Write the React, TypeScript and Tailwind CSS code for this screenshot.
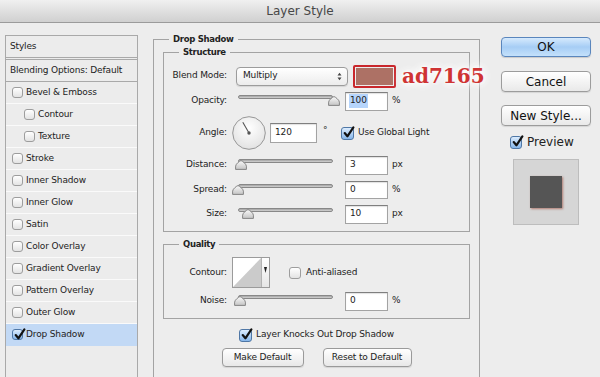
import React from "react";

function Box({ checked, cls }: { checked?: boolean; cls: string }) {
  return (
    <span
      className={`relative inline-block shrink-0 rounded-[3px] border ${
        checked
          ? "border-[#4f77a6] bg-linear-to-b from-[#dcecfd] to-[#86b6ea]"
          : "border-[#9d9d9d] bg-linear-to-b from-white to-[#e3e3e3]"
      } ${cls}`}
    >
      {checked && (
        <svg viewBox="0 0 12 12" className="absolute -top-[2px] left-[0px] h-[13px] w-[13px]">
          <path
            d="M2.5 6.5 L5 9.5 L10.5 1.2"
            fill="none"
            stroke="#111"
            strokeWidth="2"
            strokeLinecap="round"
            strokeLinejoin="round"
          />
        </svg>
      )}
    </span>
  );
}

function Slider({ pos }: { pos: number }) {
  return (
    <div className="relative ml-[11px] h-[12px] w-[95px] shrink-0">
      <div className="h-[4px] w-full rounded-full border border-[#888] bg-linear-to-b from-[#a3a3a3] to-[#d4d4d4]" />
      <svg
        viewBox="0 0 12 10"
        className="absolute top-[1px] h-[10px] w-[12px]"
        style={{ left: pos }}
      >
        <defs>
          <linearGradient id="th" x1="0" y1="0" x2="0" y2="1">
            <stop offset="0" stopColor="#fafafa" />
            <stop offset="1" stopColor="#c4c4c4" />
          </linearGradient>
        </defs>
        <path
          d="M6 0.6 C7 0.6 11.4 4 11.4 6.2 L11.4 9.4 L0.6 9.4 L0.6 6.2 C0.6 4 5 0.6 6 0.6 Z"
          fill="url(#th)"
          stroke="#7a7a7a"
          strokeWidth="0.9"
        />
      </svg>
    </div>
  );
}

function Field({
  value,
  sel,
  cls,
}: {
  value: string;
  sel?: boolean;
  cls: string;
}) {
  return (
    <div
      className={`flex shrink-0 items-center border border-[#a3a3a3] border-t-[#7f7f7f] bg-white pl-[3px] shadow-[inset_0_1px_1px_rgba(0,0,0,0.12)] ${cls}`}
    >
      <span className={sel ? "bg-[#b6d5fc] px-[1px]" : "px-[1px]"}>{value}</span>
    </div>
  );
}

const rows: { t: string; ind?: boolean; on?: boolean }[] = [
  { t: "Bevel & Emboss" },
  { t: "Contour", ind: true },
  { t: "Texture", ind: true },
  { t: "Stroke" },
  { t: "Inner Shadow" },
  { t: "Inner Glow" },
  { t: "Satin" },
  { t: "Color Overlay" },
  { t: "Gradient Overlay" },
  { t: "Pattern Overlay" },
  { t: "Outer Glow" },
  { t: "Drop Shadow", on: true },
];

export default function App() {
  return (
    <div className="flex h-[377px] w-[600px] flex-col overflow-hidden bg-[#ededed] font-['DejaVu_Sans',sans-serif] text-[#222]">
      <div className="flex h-[23px] shrink-0 items-center justify-center border-b border-[#9b9b9b] bg-linear-to-b from-[#f0f0f0] to-[#d0d0d0] text-[12px] text-[#474747]">
        Layer Style
      </div>
      <div className="flex min-h-0 flex-1">
        {/* left list */}
        <div className="flex flex-col pl-[5px] pt-[12px]">
          <div className="w-[133px] flex-1 border border-b-0 border-[#a9a9a9] bg-[#ececec] text-[9px] tracking-[-0.15px]">
            <div className="flex h-[22px] items-center border-b border-[#a9a9a9] pl-[4px]">Styles</div>
            <div className="mt-[1px] flex h-[23px] items-center border-y border-[#a9a9a9] pl-[4px]">
              Blending Options: Default
            </div>
            {rows.map((r) => (
              <div
                key={r.t}
                className={`flex h-[22px] items-center border-b ${
                  r.on ? "border-[#c2d9f5] bg-[#c2d9f5]" : "border-[#fafafa]"
                } ${r.ind ? "pl-[18px]" : "pl-[6px]"}`}
              >
                <Box checked={r.on} cls="h-[11px] w-[11px]" />
                <span className="ml-[3px]">{r.t}</span>
              </div>
            ))}
          </div>
        </div>

        {/* middle */}
        <div className="ml-[15px] pt-[9px] text-[9px] tracking-[-0.15px]">
          <fieldset className="w-[327px] min-w-0 border border-[#a3a3a3] px-[9px] pb-[40px]">
            <legend className="ml-[6px] px-[4px] text-[8.5px] font-bold leading-[14px] tracking-[-0.3px]">
              Drop Shadow
            </legend>
            <fieldset className="min-w-0 border border-[#a3a3a3] pb-[7px]">
              <legend className="ml-[15px] px-[4px] text-[8.5px] font-bold leading-[12px] tracking-[-0.3px]">
                Structure
              </legend>
              {/* blend mode */}
              <div className="mt-[7px] flex h-[22px] items-center">
                <span className="w-[63px] shrink-0 text-right">Blend Mode:</span>
                <div className="ml-[9px] flex h-[19px] w-[112px] shrink-0 items-center justify-between rounded-[4px] border border-[#9c9c9c] bg-linear-to-b from-white to-[#ececec] pl-[6px] pr-[5px] shadow-[0_1px_1px_rgba(0,0,0,0.1)]">
                  <span>Multiply</span>
                  <svg width="5" height="9" viewBox="0 0 5 9">
                    <path d="M0.5 3.5 L2.5 0.8 L4.5 3.5 Z M0.5 5.5 L2.5 8.2 L4.5 5.5 Z" fill="#444" />
                  </svg>
                </div>
                <div className="ml-[5px] h-[23px] w-[43px] shrink-0 rounded-[2px] border-[2px] border-[#c9272c] p-[1px]">
                  <div className="h-full w-full bg-[#ad7165]" />
                </div>
                <span className="ml-[6px] shrink-0 whitespace-nowrap font-['DejaVu_Serif',serif] text-[20px] font-bold tracking-normal text-[#cf3434] [text-shadow:0_0_4px_#fff,0_0_8px_#fff,0_0_12px_#fff,0_0_14px_#fff]">
                  ad7165
                </span>
              </div>
              {/* opacity */}
              <div className="mt-[3px] flex h-[22px] items-center">
                <span className="w-[63px] shrink-0 text-right">Opacity:</span>
                <Slider pos={90} />
                <Field value="100" sel cls="ml-[12px] h-[19px] w-[43px]" />
                <span className="ml-[4px]">%</span>
              </div>
              {/* angle */}
              <div className="mt-[4px] flex h-[34px] items-center">
                <span className="w-[63px] shrink-0 text-right">Angle:</span>
                <svg width="34" height="34" viewBox="0 0 34 34" className="ml-[5px] shrink-0">
                  <defs>
                    <radialGradient id="dg" cx="50%" cy="35%" r="65%">
                      <stop offset="0" stopColor="#ffffff" />
                      <stop offset="1" stopColor="#e2e2e2" />
                    </radialGradient>
                  </defs>
                  <circle cx="17" cy="17" r="16.3" fill="url(#dg)" stroke="#8c8c8c" strokeWidth="0.9" />
                  <line x1="17" y1="17" x2="10.8" y2="6.3" stroke="#555" strokeWidth="1.1" />
                  <circle cx="17" cy="17" r="1.7" fill="#555" />
                </svg>
                <Field value="120" cls="ml-[4px] h-[20px] w-[47px]" />
                <span className="ml-[6px] w-[18px] shrink-0 -translate-y-[2px]">°</span>
                <Box checked cls="h-[13px] w-[13px]" />
                <span className="ml-[4px]">Use Global Light</span>
              </div>
              {/* distance */}
              <div className="mt-[5px] flex h-[20px] items-center">
                <span className="w-[63px] shrink-0 text-right">Distance:</span>
                <Slider pos={-3} />
                <Field value="3" cls="ml-[12px] h-[19px] w-[43px]" />
                <span className="ml-[4px]">px</span>
              </div>
              {/* spread */}
              <div className="mt-[5px] flex h-[20px] items-center">
                <span className="w-[63px] shrink-0 text-right">Spread:</span>
                <Slider pos={-6} />
                <Field value="0" cls="ml-[12px] h-[18px] w-[43px]" />
                <span className="ml-[4px]">%</span>
              </div>
              {/* size */}
              <div className="mt-[4px] flex h-[20px] items-center">
                <span className="w-[63px] shrink-0 text-right">Size:</span>
                <Slider pos={4} />
                <Field value="10" cls="ml-[12px] h-[19px] w-[43px]" />
                <span className="ml-[4px]">px</span>
              </div>
            </fieldset>

            <fieldset className="mt-[6px] min-w-0 border border-[#a3a3a3] pb-[8px]">
              <legend className="ml-[15px] px-[4px] text-[8.5px] font-bold leading-[12px] tracking-[-0.3px]">
                Quality
              </legend>
              <div className="mt-[7px] flex h-[31px] items-center">
                <span className="w-[63px] shrink-0 text-right">Contour:</span>
                <div className="ml-[5px] flex h-[31px] w-[38px] shrink-0 border border-[#9b9b9b] bg-white">
                  <svg width="28" height="29" viewBox="0 0 28 29" className="shrink-0">
                    <path d="M0 29 L28 0 L28 29 Z" fill="#cbcbcb" />
                  </svg>
                  <div className="flex flex-1 justify-center border-l border-[#b3b3b3] bg-linear-to-b from-white to-[#e6e6e6] pt-[9px]">
                    <svg width="3" height="6" viewBox="0 0 3 6">
                      <path d="M0 0 H3 L1.5 6 Z" fill="#222" />
                    </svg>
                  </div>
                </div>
                <Box cls="ml-[19px] h-[12px] w-[12px]" />
                <span className="ml-[5px]">Anti-aliased</span>
              </div>
              <div className="mt-[4px] flex h-[18px] items-center">
                <span className="w-[63px] shrink-0 text-right">Noise:</span>
                <Slider pos={-4} />
                <Field value="0" cls="ml-[12px] h-[19px] w-[43px]" />
                <span className="ml-[4px]">%</span>
              </div>
            </fieldset>

            <div className="mt-[9px] flex h-[14px] items-center justify-center">
              <Box checked cls="h-[13px] w-[13px]" />
              <span className="ml-[4px]">Layer Knocks Out Drop Shadow</span>
            </div>
            <div className="mt-[6px] flex justify-center gap-[19px]">
              <button className="h-[19px] w-[82px] rounded-[4px] border border-[#9a9a9a] bg-linear-to-b from-white to-[#e8e8e8] shadow-[0_1px_1px_rgba(0,0,0,0.1)]">
                Make Default
              </button>
              <button className="h-[19px] w-[89px] rounded-[4px] border border-[#9a9a9a] bg-linear-to-b from-white to-[#e8e8e8] shadow-[0_1px_1px_rgba(0,0,0,0.1)]">
                Reset to Default
              </button>
            </div>
          </fieldset>
        </div>

        {/* right */}
        <div className="ml-[21px] flex w-[90px] flex-col pt-[14px] text-[12px]">
          <button className="h-[20px] w-[90px] rounded-[4px] border border-[#5a86bd] bg-linear-to-b from-[#d6eafd] via-[#a6cdf5] to-[#c4e1fb] text-[#111] shadow-[0_1px_1px_rgba(0,0,0,0.15)]">
            OK
          </button>
          <button className="mt-[14px] h-[21px] w-[90px] rounded-[4px] border border-[#9c9c9c] bg-linear-to-b from-white to-[#e9e9e9] text-[#111] shadow-[0_1px_1px_rgba(0,0,0,0.1)]">
            Cancel
          </button>
          <button className="mt-[13px] h-[21px] w-[90px] rounded-[4px] border border-[#9c9c9c] bg-linear-to-b from-white to-[#e9e9e9] text-[#111] shadow-[0_1px_1px_rgba(0,0,0,0.1)]">
            New Style...
          </button>
          <div className="mt-[9px] flex h-[14px] items-center pl-[9px]">
            <Box checked cls="h-[13px] w-[12px]" />
            <span className="ml-[5px]">Preview</span>
          </div>
          <div className="ml-[12px] mt-[10px] flex h-[66px] w-[66px] items-center justify-center border border-[#bdbdbd] bg-[#d6d6d6]">
            <div className="h-[32px] w-[32px] bg-[#555] shadow-[1px_1px_2px_rgba(173,113,101,0.9)]" />
          </div>
        </div>
      </div>
    </div>
  );
}
